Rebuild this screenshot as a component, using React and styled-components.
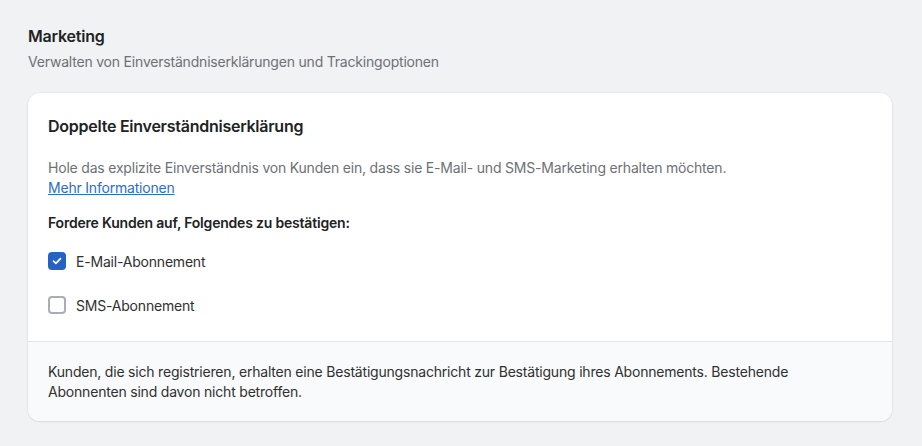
import React from "react";
import styled, { createGlobalStyle } from "styled-components";

const Global = createGlobalStyle`
  html, body { margin: 0; padding: 0; background: #f1f2f4; }
  body { font-family: Inter, "Noto Sans", sans-serif; -webkit-font-smoothing: antialiased; }
  * { box-sizing: border-box; }
`;

const Page = styled.div`
  padding: 24px 30px 26px 28px;
  background: #f1f2f4;
  min-height: 446px;
`;

const Header = styled.header`
  display: flex;
  flex-direction: column;
  gap: 4px;
  margin-bottom: 21px;
`;

const Title = styled.h1`
  margin: 0;
  font-size: 16px;
  line-height: 24px;
  font-weight: 600;
  letter-spacing: -0.2px;
  color: #202223;
`;

const Subtitle = styled.p`
  margin: 0;
  font-size: 14px;
  line-height: 20px;
  letter-spacing: -0.2px;
  color: #6d7175;
`;

const Card = styled.section`
  background: #ffffff;
  border-radius: 12px;
  box-shadow: 0 1px 2px rgba(0, 0, 0, 0.08), 0 0 0 1px rgba(0, 0, 0, 0.03);
  overflow: hidden;
`;

const CardBody = styled.div`
  padding: 19px 20px 24px;
  display: flex;
  flex-direction: column;
`;

const CardTitle = styled.h2`
  margin: 0;
  font-size: 16px;
  line-height: 28px;
  font-weight: 600;
  letter-spacing: -0.25px;
  color: #202223;
`;

const Text = styled.p`
  margin: 18px 0 0;
  font-size: 14px;
  line-height: 20px;
  letter-spacing: -0.2px;
  color: #6d7175;
`;

const Link = styled.a`
  color: #2c6ecb;
  text-decoration: underline;
  cursor: pointer;
`;

const Label = styled.p`
  margin: 15px 0 0;
  font-size: 14px;
  line-height: 20px;
  font-weight: 600;
  letter-spacing: -0.2px;
  color: #202223;
`;

const Options = styled.div`
  display: flex;
  flex-direction: column;
  gap: 20px;
  margin-top: 16px;
`;

const Option = styled.label`
  display: flex;
  align-items: center;
  gap: 10px;
  height: 24px;
  font-size: 14px;
  letter-spacing: -0.2px;
  color: #303030;
  cursor: pointer;
`;

const Box = styled.span`
  width: 18px;
  height: 18px;
  border-radius: 4px;
  display: inline-flex;
  align-items: center;
  justify-content: center;
  background: ${(p) => (p.$checked ? "#2463c5" : "#ffffff")};
  border: ${(p) => (p.$checked ? "none" : "2px solid #a9adb4")};
`;

const Footer = styled.div`
  border-top: 1px solid #e3e4e7;
  background: #f9fafb;
  padding: 20px 20px 19px;
  font-size: 14px;
  line-height: 20px;
  letter-spacing: -0.2px;
  color: #303030;
`;

const Check = () => (
  <svg width="10" height="8" viewBox="0 0 10 8" fill="none">
    <path d="M1.5 4.2 L3.9 6.3 L8.5 1.6" stroke="#fff" strokeWidth="1.7" strokeLinecap="round" strokeLinejoin="round" />
  </svg>
);

export default function App() {
  return (
    <>
      <Global />
      <Page>
        <Header>
          <Title>Marketing</Title>
          <Subtitle>Verwalten von Einverständniserklärungen und Trackingoptionen</Subtitle>
        </Header>
        <Card>
          <CardBody>
            <CardTitle>Doppelte Einverständniserklärung</CardTitle>
            <Text>
              Hole das explizite Einverständnis von Kunden ein, dass sie E-Mail- und SMS-Marketing erhalten möchten.
              <br />
              <Link>Mehr Informationen</Link>
            </Text>
            <Label>Fordere Kunden auf, Folgendes zu bestätigen:</Label>
            <Options>
              <Option>
                <Box $checked><Check /></Box>
                E-Mail-Abonnement
              </Option>
              <Option>
                <Box />
                SMS-Abonnement
              </Option>
            </Options>
          </CardBody>
          <Footer>
            Kunden, die sich registrieren, erhalten eine Bestätigungsnachricht zur Bestätigung ihres Abonnements. Bestehende
            <br />
            Abonnenten sind davon nicht betroffen.
          </Footer>
        </Card>
      </Page>
    </>
  );
}
